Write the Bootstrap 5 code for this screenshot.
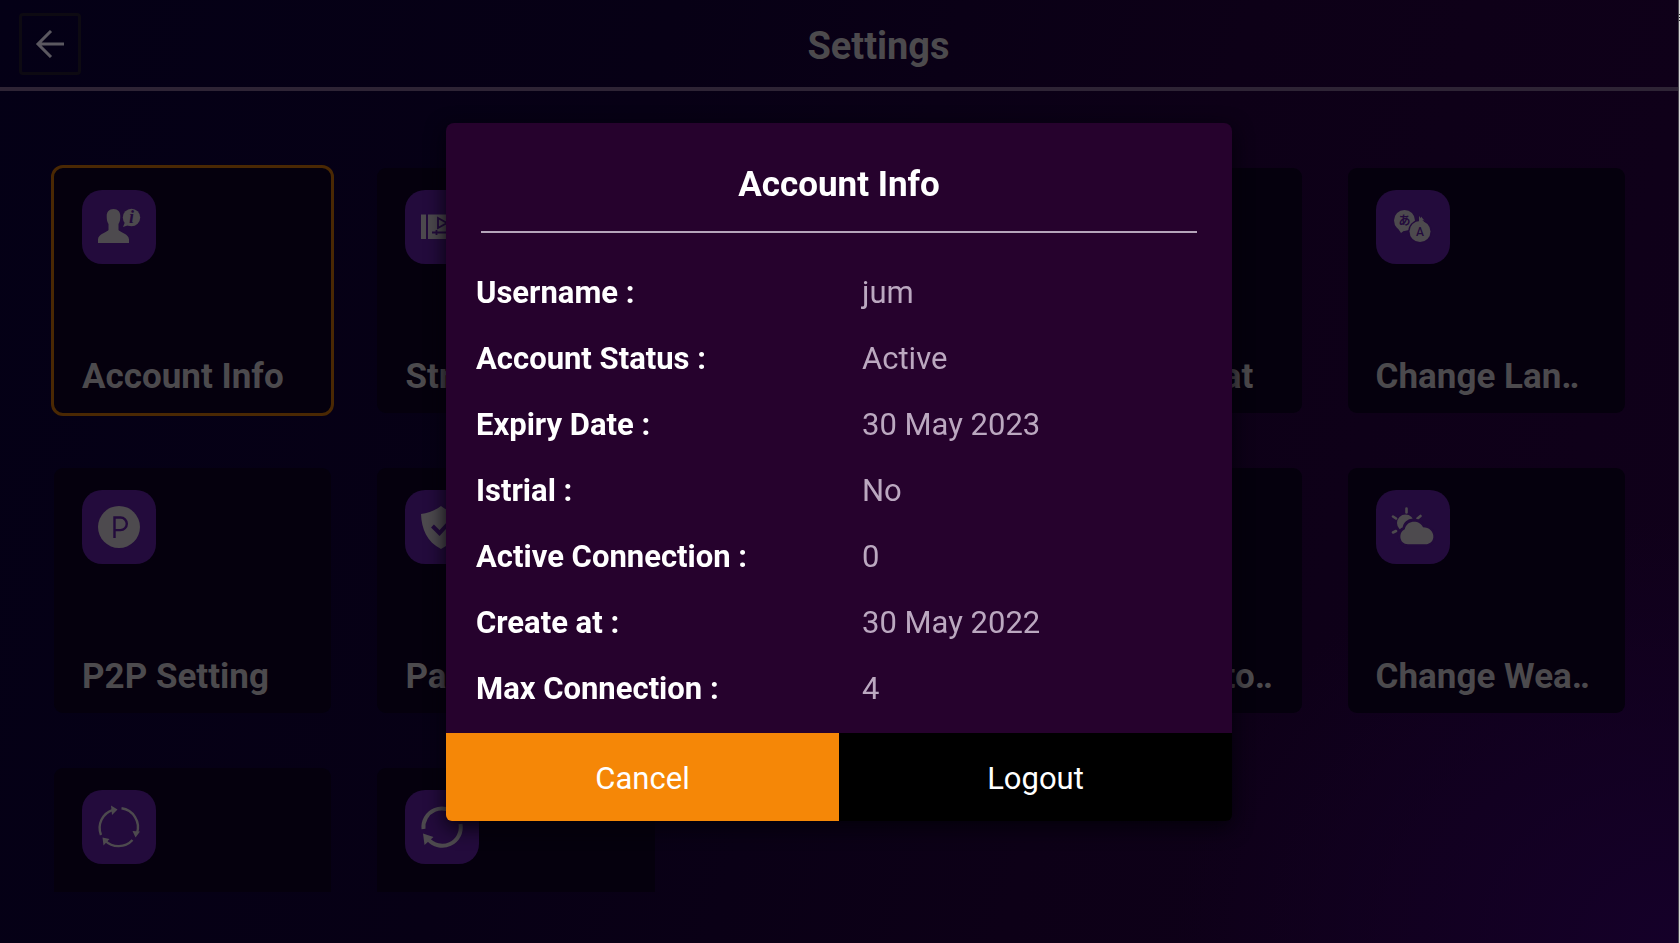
<!DOCTYPE html>
<html lang="en">
<head>
<meta charset="utf-8">
<meta name="viewport" content="width=device-width, initial-scale=1">
<title>Settings</title>
<link href="https://cdn.jsdelivr.net/npm/bootstrap@5.3.0/dist/css/bootstrap.min.css" rel="stylesheet">
<style>
  body {
    font-family: Roboto, "Noto Sans CJK JP", sans-serif;
    color: #4c4a4d;
    background: linear-gradient(to bottom, #ddd 14px, #333 14px 15px, #ddd 15px 17px, #333 17px 18px, #ddd 18px 20px, #333 20px 21px, #ddd 21px);
  }
  .app-screen {
    margin-right: 1px;
    border-right: 1px solid #4a4850;
    background:
      radial-gradient(ellipse 30% 45% at 100% 100%, #150029, transparent),
      linear-gradient(105deg, #040016 0%, #070015 35%, #0d0017 65%, #10001a 100%);
  }
  .top-bar { height: 91px; border-bottom: 4px solid #2e2435; padding: 0 2px 0 19px; }
  .back-btn { width: 62px; height: 62px; border: 3px solid #0d0a12; border-radius: 4px; color: #5b5860; }
  .screen-title { font-size: 38px; line-height: 45px; padding-top: 6px; }
  .tile-area { margin: 74px 50px 51px 51px; height: 0; }
  .tile-grid { display: grid; grid-template-columns: repeat(5, minmax(0, 1fr)); grid-auto-rows: 251px; gap: 49px 40px; }
  .tile {
    background: #05000d; background-clip: padding-box;
    border: 3px solid transparent; border-radius: 12px;
    padding: 22px 28px 16px; color: inherit;
    font-size: 35px; line-height: 41px; font-weight: 700;
    white-space: nowrap;
  }
  .tile.selected { border-color: #4a2803; }
  .tile-icon { width: 74px; height: 74px; border-radius: 20px; background: #230b3c; color: #4d4a4e; }
  .tile-icon svg { width: 42px; height: 42px; overflow: visible; }
  .ink { fill: #230b3c; }
  .ink-line { stroke: #230b3c; fill: none; }
  .account-modal { width: calc(100% - 2px); }
  .account-modal .modal-dialog { max-width: 786px; }
  .account-modal .modal-content { background: #26022d; border-radius: 8px; color: #fff; box-shadow: 0 6px 20px 0 #04000a; }
  .dialog-title { font-size: 35px; line-height: 41px; padding: 41px 0 26px; margin: 0 35px; border-bottom: 2px solid #b5a5ba; }
  .info-list { font-size: 31px; line-height: 36px; padding: 27px 30px 11px; }
  .info-list .info-row { padding: 15px 0; }
  .info-list dt { width: 386px; font-weight: 700; }
  .info-list dd { color: #bba8c0; }
  .dialog-btn { font-size: 31px; line-height: 36px; padding: 28px 0 24px; color: #fff; background: #000; }
  .dialog-btn.primary { background: #f58707; }
</style>
</head>
<body>
<div class="app-screen d-flex flex-column min-vh-100">
  <header class="top-bar d-flex align-items-center">
    <button type="button" class="back-btn bg-transparent p-0 d-flex align-items-center justify-content-center" aria-label="Back">
      <svg width="30" height="28" viewBox="0 0 30 28" fill="none" stroke="currentColor" stroke-width="3"><path d="M29 14H3M16 1 3 14l13 13"/></svg>
    </button>
    <h1 class="screen-title flex-grow-1 text-center fw-bold mb-0">Settings</h1>
  </header>

  <main class="tile-area flex-grow-1 overflow-hidden">
    <div class="tile-grid">
      <button type="button" class="tile selected d-flex flex-column justify-content-between align-items-start">
        <span class="tile-icon d-flex align-items-center justify-content-center">
          <svg viewBox="0 0 42 42" fill="currentColor"><path d="M15.500 3c4.500 0 6.800 3 6.800 7 0 3-.3 6-1.800 8v6c1 2 10.500 4 10.500 9.500V37H0v-3.500C0 28 9.500 26 10.500 24v-6c-1.500-2-1.800-5-1.800-8 0-4 2.300-7 6.800-7Z"/><circle cx="33.500" cy="11.500" r="8.700"/><path d="m27 16-2 5 6-2z"/><text class="ink" x="33.500" y="17" text-anchor="middle" font-family="Liberation Serif, serif" font-style="italic" font-weight="700" font-size="18">i</text></svg>
        </span>
        <span>Account Info</span>
      </button>
      <button type="button" class="tile d-flex flex-column justify-content-between align-items-start">
        <span class="tile-icon d-flex align-items-center justify-content-center">
          <svg viewBox="0 0 42 42" fill="currentColor"><path d="M0 8.500h5V33H0zM7 8.500h35V33H7z"/><path class="ink-line" stroke-width="1.800" d="M17 12v10l9-5zM11 26.500h27M15.500 24v5"/></svg>
        </span>
        <span>Str</span>
      </button>
      <div class="tile"></div>
      <button type="button" class="tile d-flex flex-column justify-content-end align-items-start"><span>Time Format</span></button>
      <button type="button" class="tile d-flex flex-column justify-content-between align-items-start">
        <span class="tile-icon d-flex align-items-center justify-content-center">
          <svg viewBox="0 0 42 42" fill="currentColor"><circle cx="12.500" cy="14.500" r="10.500"/><path d="m5 21 4 6 4-3zM29 15v-4.500l5 6z"/><circle class="ink" cx="28" cy="25.500" r="11.800"/><circle cx="28" cy="25.500" r="10.500"/><path d="M27 16v-6l6 7z"/><text class="ink" x="12.500" y="19" text-anchor="middle" font-family="Noto Sans CJK JP, sans-serif" font-weight="700" font-size="12">あ</text><text class="ink" x="28" y="30" text-anchor="middle" font-weight="500" font-size="12">A</text></svg>
        </span>
        <span>Change Lan‥</span>
      </button>

      <button type="button" class="tile d-flex flex-column justify-content-between align-items-start">
        <span class="tile-icon d-flex align-items-center justify-content-center">
          <svg viewBox="0 0 42 42" fill="currentColor"><circle cx="21" cy="21" r="21"/><path class="ink-line" stroke-width="2.400" d="M16.500 32V11.500h6a6.300 6.300 0 0 1 0 12.600h-6"/></svg>
        </span>
        <span>P2P Setting</span>
      </button>
      <button type="button" class="tile d-flex flex-column justify-content-between align-items-start">
        <span class="tile-icon d-flex align-items-center justify-content-center">
          <svg viewBox="0 0 42 42" fill="currentColor"><path d="M20 0c6 4.500 12 7 19 8 .5 15-5 28-19 35C6 36 .5 23 0 8c7-1 14-3.500 20-8Z"/><path class="ink-line" stroke-width="4" d="m11.500 20 7 7 12-13"/></svg>
        </span>
        <span>Par</span>
      </button>
      <div class="tile"></div>
      <button type="button" class="tile d-flex flex-column justify-content-end align-items-start"><span>Change Auto‥</span></button>
      <button type="button" class="tile d-flex flex-column justify-content-between align-items-start">
        <span class="tile-icon d-flex align-items-center justify-content-center">
          <svg viewBox="0 0 42 42" fill="currentColor"><circle cx="13.500" cy="17" r="8.500"/><path d="M14.500 2.500v4M1 10.500l3 2M1 26.500l3-1.500M25.500 12.500l3-2.500" stroke="currentColor" stroke-width="2.600" stroke-linecap="round"/><path d="M16.500 38.300a8 8 0 0 1-3.500-15.500C13.500 13 28 12.500 31 21.200c12 0 14 17.100 2 17.100Z" stroke="#230b3c" stroke-width="5"/><path d="M16 38.300c-9 0-10-12-3.200-15C14.500 13.500 28 13.500 31 21.200c13 0 14 17.100 2 17.100Z"/></svg>
        </span>
        <span>Change Wea‥</span>
      </button>

      <button type="button" class="tile d-flex align-items-start" aria-label="Refresh">
        <span class="tile-icon d-flex align-items-center justify-content-center">
          <svg viewBox="0 0 42 42" fill="currentColor"><path d="M3 29A19 19 0 0 1 15 3.800M23.500 2.300A19 19 0 0 1 39 27M34.500 34A19 19 0 0 1 7 34.500" fill="none" stroke="currentColor" stroke-width="2.400"/><path d="m13-.5 6.500 4L14 9zM34.500 25l7.500.5-4.500 6zM4.500 31.500l7 1.500-6 6.500z"/></svg>
        </span>
      </button>
      <button type="button" class="tile d-flex align-items-start" aria-label="Sync">
        <span class="tile-icon d-flex align-items-center justify-content-center">
          <svg viewBox="0 0 42 42" fill="currentColor"><path d="M2.500 23A18.500 18.500 0 0 1 35 9M39.500 18A18.500 18.500 0 0 1 7 33" fill="none" stroke="currentColor" stroke-width="4"/><path d="M2 27.500 12.500 31 3.500 39zM31 12l8 1V4z"/></svg>
        </span>
      </button>
    </div>
  </main>
</div>

<div class="modal account-modal d-block overflow-hidden" role="dialog" aria-modal="true" aria-labelledby="dialogTitle">
  <div class="modal-dialog modal-dialog-centered my-0 min-vh-100">
    <div class="modal-content border-0 overflow-visible">
      <h2 id="dialogTitle" class="dialog-title text-center fw-bold">Account Info</h2>
      <dl class="info-list mb-0">
        <div class="info-row d-flex"><dt>Username :</dt><dd class="mb-0">jum</dd></div>
        <div class="info-row d-flex"><dt>Account Status :</dt><dd class="mb-0">Active</dd></div>
        <div class="info-row d-flex"><dt>Expiry Date :</dt><dd class="mb-0">30 May 2023</dd></div>
        <div class="info-row d-flex"><dt>Istrial :</dt><dd class="mb-0">No</dd></div>
        <div class="info-row d-flex"><dt>Active Connection :</dt><dd class="mb-0">0</dd></div>
        <div class="info-row d-flex"><dt>Create at :</dt><dd class="mb-0">30 May 2022</dd></div>
        <div class="info-row d-flex"><dt>Max Connection :</dt><dd class="mb-0">4</dd></div>
      </dl>
      <div class="d-flex rounded-bottom overflow-hidden">
        <button type="button" class="dialog-btn primary border-0 w-50">Cancel</button>
        <button type="button" class="dialog-btn border-0 w-50">Logout</button>
      </div>
    </div>
  </div>
</div>
<script src="https://cdn.jsdelivr.net/npm/bootstrap@5.3.0/dist/js/bootstrap.bundle.min.js"></script>
</body>
</html>
